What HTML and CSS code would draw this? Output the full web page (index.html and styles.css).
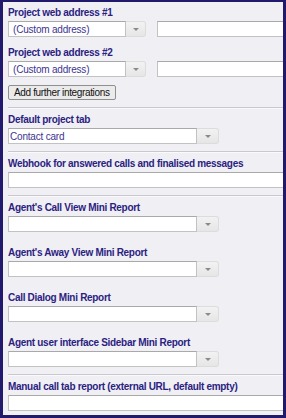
FILE: index.html
```html
<!DOCTYPE html>
<html lang="en">

<head>
    <meta charset="UTF-8">
    <meta name="viewport" content="width=device-width, initial-scale=1.0">
    <title>Project settings</title>
    <link rel="stylesheet" href="styles.css">
</head>

<body>
    <div class="panel">
        <div class="field">
            <label class="label">Project web address #1</label>
            <div class="row">
                <div class="combo combo-short">
                    <input class="combo-input" value="(Custom address)" readonly>
                    <span class="trigger"></span>
                </div>
                <input class="text url">
            </div>
        </div>
        <div class="field field-tight">
            <label class="label">Project web address #2</label>
            <div class="row">
                <div class="combo combo-short">
                    <input class="combo-input" value="(Custom address)" readonly>
                    <span class="trigger"></span>
                </div>
                <input class="text url">
            </div>
        </div>
        <button class="btn">Add further integrations</button>

        <hr class="sep">

        <div class="field">
            <label class="label">Default project tab</label>
            <div class="combo combo-long">
                <input class="combo-input flat" value="Contact card" readonly>
                <span class="trigger"></span>
            </div>
        </div>

        <hr class="sep">

        <div class="field">
            <label class="label">Webhook for answered calls and finalised messages</label>
            <input class="text wide">
        </div>

        <hr class="sep">

        <div class="field mini">
            <label class="label">Agent's Call View Mini Report</label>
            <div class="combo combo-long">
                <input class="combo-input" readonly>
                <span class="trigger"></span>
            </div>
        </div>
        <div class="field mini">
            <label class="label">Agent's Away View Mini Report</label>
            <div class="combo combo-long">
                <input class="combo-input" readonly>
                <span class="trigger"></span>
            </div>
        </div>
        <div class="field mini">
            <label class="label">Call Dialog Mini Report</label>
            <div class="combo combo-long">
                <input class="combo-input" readonly>
                <span class="trigger"></span>
            </div>
        </div>
        <div class="field">
            <label class="label">Agent user interface Sidebar Mini Report</label>
            <div class="combo combo-long">
                <input class="combo-input" readonly>
                <span class="trigger"></span>
            </div>
        </div>

        <hr class="sep">

        <div class="field">
            <label class="label">Manual call tab report (external URL, default empty)</label>
            <input class="text wide">
        </div>
    </div>
</body>

</html>
```

FILE: styles.css
```css
html,
body {
    margin: 0;
}

body {
    font-family: "Liberation Sans", Arial, sans-serif;
    font-size: 10px;
}

.panel {
    box-sizing: border-box;
    height: 418px;
    border: 3px solid #21196b;
    border-top-width: 2px;
    background-color: #efeff4;
    padding: 4px 0 0 5px;
    overflow: hidden;
}

.field {
    margin-bottom: 7px;
}

.field-tight {
    margin-bottom: 8px;
}

.field:first-child {
    margin-bottom: 9px;
}

.mini {
    margin-bottom: 14px;
}

.label {
    display: block;
    margin-bottom: 1px;
    line-height: 14px;
    font-weight: bold;
    color: #2b2280;
    letter-spacing: -0.3px;
    white-space: nowrap;
}

.row {
    display: flex;
    align-items: center;
}

.combo {
    display: flex;
    flex: none;
}

.combo-input {
    box-sizing: border-box;
    height: 16px;
    margin: 0;
    padding: 0 4px;
    border: 1px solid #c2c2c2;
    border-top-color: #a9a9a9;
    background: #fff;
    font-family: inherit;
    font-size: 10px;
    color: #3d3490;
    letter-spacing: -0.2px;
    outline: none;
}

.combo-input.flat {
    padding-left: 1px;
}

.combo-short .combo-input {
    width: 118px;
}

.combo-long .combo-input {
    width: 189px;
}

.trigger {
    box-sizing: border-box;
    display: flex;
    align-items: center;
    justify-content: center;
    height: 16px;
    border: 1px solid #dcdcdc;
    border-left: none;
    border-radius: 0 3px 3px 0;
    background: linear-gradient(#f2f2f2, #e6e6e6);
}

.combo-short .trigger {
    width: 20px;
}

.combo-long .trigger {
    width: 22px;
}

.trigger::after {
    content: "";
    border-left: 3px solid transparent;
    border-right: 3px solid transparent;
    border-top: 3px solid #8a8a8a;
}

.text {
    box-sizing: border-box;
    height: 16px;
    margin: 0;
    padding: 0 3px;
    border: 1px solid #c2c2c2;
    border-top-color: #a9a9a9;
    background: #fff;
    outline: none;
    flex: none;
}

.url {
    width: 160px;
    margin-left: 11px;
}

.wide {
    display: block;
    width: 300px;
}

.btn {
    display: block;
    box-sizing: border-box;
    width: 108px;
    height: 15px;
    margin: 0 0 7px;
    padding: 0 0 0 5px;
    border: 1px solid #8f8f8f;
    border-radius: 2px;
    background-color: #ebebeb;
    font-family: inherit;
    font-size: 10px;
    line-height: 13px;
    color: #111;
    letter-spacing: -0.35px;
    text-align: left;
    white-space: nowrap;
}

.sep {
    height: 0;
    margin: 0 0 5px;
    border: 0;
    border-top: 1px solid #c8c8ce;
    box-shadow: 0 1px 0 #fafafc;
}
```
